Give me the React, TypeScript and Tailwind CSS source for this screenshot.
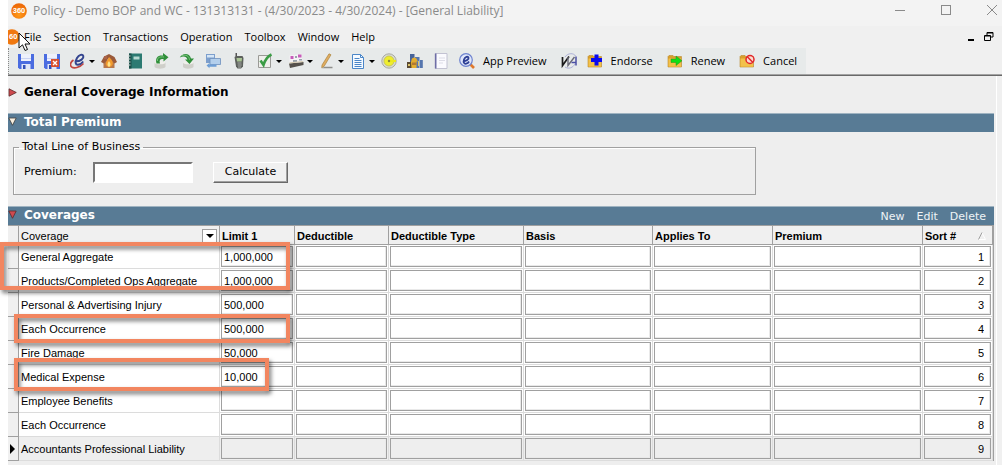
import type { ReactNode } from "react";

const columns = ["Limit 1", "Deductible", "Deductible Type", "Basis", "Applies To", "Premium"];

const rows = [
  { coverage: "General Aggregate", limit: "1,000,000" },
  { coverage: "Products/Completed Ops Aggregate", limit: "1,000,000" },
  { coverage: "Personal & Advertising Injury", limit: "500,000" },
  { coverage: "Each Occurrence", limit: "500,000" },
  { coverage: "Fire Damage", limit: "50,000" },
  { coverage: "Medical Expense", limit: "10,000" },
  { coverage: "Employee Benefits", limit: "" },
  { coverage: "Each Occurrence", limit: "" },
  { coverage: "Accountants Professional Liability", limit: "" },
];

const menu = ["File", "Section", "Transactions", "Operation", "Toolbox", "Window", "Help"];

function Icon({ children }: { children: ReactNode }) {
  return (
    <svg viewBox="0 0 16 16" className="size-4 shrink-0" aria-hidden="true">
      {children}
    </svg>
  );
}

function Logo() {
  return (
    <svg viewBox="0 0 16 16" className="size-4 shrink-0" aria-hidden="true">
      <defs>
        <radialGradient id="orb" cx="50%" cy="75%" r="65%">
          <stop offset="0" stopColor="#ff9a1a" />
          <stop offset="1" stopColor="#ee6a08" />
        </radialGradient>
      </defs>
      <circle cx="8" cy="8" r="7.8" fill="url(#orb)" />
      <text x="8" y="10.2" textAnchor="middle" fontSize="7.5" fontWeight="700" fill="#fff" fontFamily="Liberation Sans, sans-serif">
        360
      </text>
    </svg>
  );
}

function DocumentLogo() {
  return (
    <svg viewBox="4 0 12 16" className="h-4 w-3 shrink-0" aria-hidden="true">
      <circle cx="8" cy="8" r="7.8" fill="#f0780f" />
      <text x="5" y="10.2" fontSize="7.5" fontWeight="700" fill="#fff" fontFamily="Liberation Sans, sans-serif">
        60
      </text>
    </svg>
  );
}

function Floppy() {
  return (
    <>
      <path d="M0 1h16v15H1.500L0 14.500z" fill="#4a6ce0" />
      <path d="M3 1h10v7H3z" fill="#eef1fb" />
      <path d="M3 5h10v1H3z" fill="#c9d2f2" />
      <path d="M3.500 11h9v5h-9z" fill="#dfe5f8" />
      <path d="M5 12h2.500v4H5z" fill="#3350b8" />
    </>
  );
}

function Folder() {
  return (
    <>
      <path d="M1 3.500 2 2.500h4l1 1h7.500v10.500H1z" fill="#d9a02c" stroke="#b98a30" strokeWidth=".6" />
      <path d="M1.500 5.500h12.500v8.200H1.500z" fill="#f2c14a" />
    </>
  );
}

type Tool = { name: string; art: ReactNode; drop?: boolean };

const tools: Tool[] = [
  { name: "Save", art: <Floppy /> },
  {
    name: "Save and close",
    art: (
      <>
        <Floppy />
        <path d="M7 6h8v8H7z" fill="#d9502f" />
        <path d="m9 8 4 4m0-4-4 4" stroke="#fff" strokeWidth="1.400" />
      </>
    ),
  },
  {
    name: "eForms",
    drop: true,
    art: (
      <>
        <path d="M3.500 7C.5 9-.5 12 1.500 13.800c2.500 2 8 1 12-3.300" fill="none" stroke="#c2453f" strokeWidth="1.700" />
        <path
          d="M6 8.300c4.500 0 8-2.800 7.300-5.300C12.600.8 9 1.500 7 5c-2.300 4-1.500 7 1 6.800 2-.2 3.800-1.500 5.200-3.300"
          fill="none"
          stroke="#34458f"
          strokeWidth="2"
        />
      </>
    ),
  },
  {
    name: "Home",
    art: (
      <>
        <path d="M2.500 7h11v8h-11z" fill="#b8784a" />
        <path d="M0 9 3 3.500 8 1l5.500 3L16 9l-2.500 1.500L8 5 3 10.500z" fill="#9a5a3a" />
        <path d="M3 3h3v3H3z" fill="#a9634a" />
        <path d="M8 4c3.500 3 4.500 5.500 3.500 8-1 2.500-5.500 2.500-6.500 0-1-3 2-5 3-8z" fill="#f29a2c" />
        <path d="M8 8c2 2.500 2 5 0 6-2-1-2-3.500 0-6z" fill="#ffe48a" />
      </>
    ),
  },
  {
    name: "Notebook",
    art: (
      <>
        <path d="M2 .5h13v15H2z" fill="#2c7a72" />
        <path d="M2 .5h2.500v15H2z" fill="#1a4f49" />
        <path d="M6.500 3.500h6v3h-6z" fill="#b6dad2" />
        <path d="M1 3h2.500M1 6h2.500M1 9h2.500M1 12h2.500" stroke="#c9d4d2" />
      </>
    ),
  },
  {
    name: "Check out",
    art: (
      <>
        <path d="M1.500 9.500V14c2 2.300 9 2.300 11 0V9.500z" fill="#cfcfca" />
        <ellipse cx="7" cy="9.500" rx="5.500" ry="1.800" fill="#efefeb" />
        <path d="M3.500 10.500C2 4.500 5 2 10 2.500V0l5.500 4.300L10.500 8.500V6C7 5.500 6 7 7 10.500z" fill="#2f8f3a" />
        <path d="M4.500 8C4 5 6 3.500 11 4" fill="none" stroke="#79c27a" />
      </>
    ),
  },
  {
    name: "Check in",
    art: (
      <>
        <path d="M4 9.500V14c2 2.300 8 2.300 10.500 0V9.500z" fill="#cfcfca" />
        <ellipse cx="9.300" cy="9.500" rx="5.300" ry="1.800" fill="#efefeb" />
        <path d="M.8 4.500C3 0 10.500-.8 12 5.500h3L10.500 11 6 6.500h2.500C7.500 3 4 2.800.8 4.500z" fill="#2f8f3a" />
        <path d="M3 2.800c4-1.500 7 0 7.500 4" fill="none" stroke="#79c27a" />
      </>
    ),
  },
  {
    name: "Transfer",
    art: (
      <>
        <path d="M1 1h9v9H1z" fill="#7d9fcd" />
        <path d="M2 2h7v2.500H2z" fill="#d5e5f5" />
        <path d="M5 5.500h10.500v6H5z" fill="#b3cfec" stroke="#6d8fbd" strokeWidth=".8" />
        <path d="m1.500 12.500 3-2.500v1.500h7v2.300h-7v1.500z" fill="#6d9ed6" />
      </>
    ),
  },
  {
    name: "Phone",
    art: (
      <>
        <path d="M4.500 0H6v4H4.500z" fill="#555" />
        <path d="m3.500 4 2-1h6l1 2-.5 8.500-2 2H6.500l-1.500-2z" fill="#5c605c" />
        <path d="M5.500 5h5.500l-.3 3.500H6z" fill="#a9c494" />
        <path d="M6.500 10h4M6.700 12h4M7 14h3" stroke="#a8aca8" />
      </>
    ),
  },
  {
    name: "Approve",
    drop: true,
    art: (
      <>
        <path d="M1.500 2.500h12v12h-12z" fill="#efefec" stroke="#9a9a96" />
        <path d="m3.500 7.500 3 4.500C8 7 10 3.500 14.500 1.500" fill="none" stroke="#3a9c45" strokeWidth="2.600" />
      </>
    ),
  },
  {
    name: "Contacts",
    drop: true,
    art: (
      <>
        <path d="M1.500 2.500 13.500 1l1 8.500H1.500z" fill="#f5f2f6" />
        <path d="M2.500 3h3v3h-3zM10 1.500h3.500v3H10z" fill="#c75cb9" />
        <path d="M7 3h2v2H7zM5 7h4v2H5zM11 6h3v1.500h-3z" fill="#9aa3ad" />
        <path d="m1 10.500 14.500-1.500V12L2 15z" fill="#55514c" />
        <path d="m1 10.500 14.500-1.500-1-1L2 9.300z" fill="#d8ccb2" />
      </>
    ),
  },
  {
    name: "Edit",
    drop: true,
    art: (
      <>
        <path d="m10 .8 2 1L5 13.500l-2.300 1.300.3-2.800z" fill="#e0ad62" stroke="#a3782e" strokeWidth=".6" />
        <path d="M3 15.200h10.500v-1.400H5.500z" fill="#8f8f8c" />
      </>
    ),
  },
  {
    name: "Document",
    drop: true,
    art: (
      <>
        <path d="M2.500 1.500h8l3 3v11h-11z" fill="#f5faff" stroke="#4a86c8" />
        <path d="M10.500 1.500v3h3" fill="none" stroke="#4a86c8" />
        <path d="M4.500 5.500h5m-5 2h7m-7 2h7m-7 2h7m-7 2h7" stroke="#4a86c8" />
      </>
    ),
  },
  {
    name: "Target",
    art: (
      <>
        <circle cx="8" cy="8" r="7.200" fill="#d9dacf" stroke="#a9aba3" />
        <circle cx="8" cy="8" r="5" fill="#efee2d" stroke="#c2bf52" strokeWidth=".8" />
        <path d="M8 7h7v2H8z" fill="#ece91c" />
        <circle cx="8" cy="8" r="1.200" fill="#8c8b3a" />
      </>
    ),
  },
  {
    name: "City",
    art: (
      <>
        <path d="M3 1h4.500v14H3z" fill="#46639a" />
        <path d="M8 4h4.500v11H8zM13 7h2.800v8H13z" fill="#5676ae" />
        <path d="M0 9h6v6H0z" fill="#5a4a32" />
        <path d="M4.500 7c0-3.500 5.500-3.500 5.500 0l1 1.500H9.500L9.500 15h-5L4 9z" fill="#e3ad30" />
        <path d="M5 9.500h4.500V12H5z" fill="#b07a34" />
        <path d="M1 11h2v2H1zM11 8h1v5h-1z" fill="#d9c36a" />
      </>
    ),
  },
  {
    name: "Page",
    art: (
      <>
        <path d="M2 .5h12v15H2z" fill="#fafafe" stroke="#c2c2d2" />
        <path d="M2 .5h1.500v15H2z" fill="#6e6ea6" />
        <path d="M6 5h6M6 7.500h6M6 10h4" stroke="#dcdce6" />
      </>
    ),
  },
];

function Caret() {
  return <span className="size-0 border-x-[3px] border-t-[3px] border-x-transparent border-t-black" />;
}

function LabelledTool({ label, children }: { label: string; children: ReactNode }) {
  return (
    <button className="flex h-full items-center gap-2 pr-[9px] pl-[5px] whitespace-nowrap">
      <Icon>{children}</Icon>
      {label}
    </button>
  );
}

function TitleBar() {
  return (
    <header className="flex h-[26px] items-center bg-[#f3f3f3] pl-[3px] text-xs text-[#8a8a8a]">
      <div className="flex items-center gap-[6px] pb-1">
        <Logo />
        <h1>Policy - Demo BOP and WC - 131313131 - (4/30/2023 - 4/30/2024) - [General Liability]</h1>
      </div>
      <div className="ml-auto flex items-center gap-[34px] pr-1 pb-[6px]">
        <button aria-label="Minimize">
          <svg viewBox="0 0 12 12" className="size-3" stroke="#8a8a8a" fill="none"><path d="M1 6.500h10" /></svg>
        </button>
        <button aria-label="Maximize">
          <svg viewBox="0 0 12 12" className="size-3" stroke="#8a8a8a" fill="none"><rect x="1.500" y="1.500" width="9" height="9" /></svg>
        </button>
        <button aria-label="Close">
          <svg viewBox="0 0 12 12" className="size-3" stroke="#8a8a8a" fill="none"><path d="m1 1 10 10M11 1 1 11" /></svg>
        </button>
      </div>
    </header>
  );
}

function MenuBar() {
  return (
    <nav className="relative flex h-[22px] items-center gap-1 text-[11px] text-black">
      <DocumentLogo />
      <ul className="flex gap-3">
        {menu.map((item) => (
          <li key={item}><button>{item}</button></li>
        ))}
      </ul>
      <div className="ml-auto flex items-center gap-2 pr-2">
        <button aria-label="Minimize document">
          <svg viewBox="0 0 10 10" className="size-[10px]"><path d="M2 7h6v2H2z" /></svg>
        </button>
        <button aria-label="Restore document">
          <svg viewBox="0 0 10 10" className="size-[10px]" fill="none" stroke="#000">
            <path d="M3 3.500V.5h6v4.500H7M3 1h6M1 4h5.500M.5 3.500h6v5h-6z" />
          </svg>
        </button>
      </div>
      <svg viewBox="0 0 13 20" className="absolute top-[6px] left-[10px] z-10 h-5 w-[13px]" aria-hidden="true">
        <path d="M1 1v15l3.500-3.200L7 18.500l2.500-1L7 12h5z" fill="#fff" stroke="#111" />
      </svg>
    </nav>
  );
}

function ToolBar() {
  return (
    <div className="flex h-[27px] border-b border-[#a3a3a3] text-[11px] text-black">
      <div role="toolbar" aria-label="Policy" className="flex h-[26px] items-center border-l border-dotted border-[#888] bg-[#e7eaea] pl-1">
        {tools.map((t) =>
          t.drop ? (
            <button key={t.name} aria-label={t.name} className="flex h-full w-[31px] items-center gap-[3px] pl-[5px]">
              <Icon>{t.art}</Icon>
              <Caret />
            </button>
          ) : (
            <button key={t.name} aria-label={t.name} className="flex h-full w-[26px] items-center justify-center">
              <Icon>{t.art}</Icon>
            </button>
          ),
        )}
        <LabelledTool label="App Preview">
          <path d="m10 10 5 5" stroke="#e07a2e" strokeWidth="2.600" />
          <circle cx="7" cy="7" r="6.300" fill="#dfe6fa" stroke="#6d83cf" strokeWidth="1.200" />
          <path d="M4 8.300c3.500-.2 6-2 5.500-3.600C9 3 6 3.500 5 6.500c-1 3 .3 4.700 2.200 4.200C8.600 10.400 9.500 9.500 10 8.500" fill="none" stroke="#2d3f94" strokeWidth="1.800" />
        </LabelledTool>
        <button aria-label="Validate" className="flex h-full w-[26px] items-center justify-center">
          <Icon>
            <path d="M4 4C7-.5 13 0 14.500 3M4 14c4 2.500 8 .5 10-3" fill="none" stroke="#a5a8d4" strokeWidth=".9" />
            <path d="M1.500 4v8.500L8 3.500" fill="none" stroke="#1b1b1b" strokeWidth="1.700" />
            <path d="M7 4v8.500L13.500 4" fill="none" stroke="#6a6a78" strokeWidth="1.400" />
            <path d="M15 3.500v9M10.500 9.500H15" fill="none" stroke="#4b4fa5" strokeWidth="1.500" />
          </Icon>
        </button>
        <LabelledTool label="Endorse">
          <Folder />
          <path d="M7.500 1.500h4V5H15v4h-3.500v3.500h-4V9H4V5h3.500z" fill="#0a0af0" />
        </LabelledTool>
        <LabelledTool label="Renew">
          <Folder />
          <path d="M4 6h5V3l6 4.800-6 4.700V9.500H4z" fill="#0fe016" stroke="#2e8a1c" strokeWidth=".5" />
        </LabelledTool>
        <LabelledTool label="Cancel">
          <Folder />
          <circle cx="11" cy="6.500" r="4" fill="#f8dcd0" stroke="#e3262a" strokeWidth="1.500" />
          <path d="m8.300 3.700 5.400 5.600" stroke="#e3262a" strokeWidth="1.500" />
        </LabelledTool>
      </div>
    </div>
  );
}

function Triangle({ open, light }: { open?: boolean; light?: boolean }) {
  return (
    <svg viewBox="0 0 9 9" className="size-[9px] shrink-0" aria-hidden="true">
      <path
        d={open ? "M.8 1h7.400L4.500 8.300z" : "M1 .8v7.400L8.300 4.500z"}
        fill={light ? "#f7efdf" : "#cf4a4f"}
        stroke={light ? "#3c3c3c" : "#5b2b2b"}
        strokeWidth=".8"
      />
    </svg>
  );
}

function SectionBar({ title, light, children }: { title: string; light?: boolean; children?: ReactNode }) {
  return (
    <div className="flex h-[19px] items-center border-t border-[#9fb3c1] bg-[#587b95]">
      <button aria-expanded="true" className="flex items-center gap-[7px] pb-[3px] text-xs font-bold text-white">
        <Triangle open light={light} />
        {title}
      </button>
      {children}
    </div>
  );
}

function Field({ label, value, muted, right }: { label: string; value: string; muted?: boolean; right?: boolean }) {
  return (
    <input
      aria-label={label}
      defaultValue={value}
      className={`block h-[21px] w-full border border-[#a0a0a0] pt-px text-[11px] text-black shadow-[inset_-1px_-1px_0_#e9e9e9] outline-none ${
        muted ? "bg-[#eeeeee]" : "bg-white"
      } ${right ? "pr-[6px] text-right" : "pl-[2px]"}`}
    />
  );
}

const headCell = "border-r border-b border-[#a0a0a0] bg-[#f0f0f0] px-[2px] pt-[2px] pb-0 text-left leading-4 font-bold whitespace-nowrap";

function CoverageTable() {
  return (
    <div className="relative border-t border-r border-[#a0a0a0] font-['Liberation_Sans',Arial,sans-serif] text-[11px] text-black">
      <table className="w-full table-fixed border-separate border-spacing-0">
        <colgroup>
          <col className="w-[11px]" />
          <col className="w-[201px]" />
          <col className="w-[75px]" />
          <col className="w-[94px]" />
          <col className="w-[135px]" />
          <col className="w-[129px]" />
          <col className="w-[120px]" />
          <col className="w-[150px]" />
          <col className="w-[70px]" />
        </colgroup>
        <thead>
          <tr className="h-[19px]">
            <th className="border-r border-b border-[#a0a0a0] bg-[#f0f0f0] p-0" />
            <th className={headCell}>
              <div className="flex h-4 items-center justify-between font-normal">
                Coverage
                <button aria-label="Filter coverage" className="flex h-[15px] w-[15px] items-center justify-center border border-[#a0a0a0] bg-white">
                  <span className="size-0 border-x-4 border-t-4 border-x-transparent border-t-black" />
                </button>
              </div>
            </th>
            {columns.map((c) => (
              <th key={c} className={headCell}>{c}</th>
            ))}
            <th className={headCell}>
              <div className="flex items-center justify-between pr-1">
                Sort #
                <svg viewBox="0 0 8 8" className="size-2" aria-hidden="true">
                  <path d="M4 1 7.500 7.500H.5" fill="none" stroke="#fff" />
                  <path d="M.5 7.500 4 .5" stroke="#a0a0a0" />
                </svg>
              </div>
            </th>
          </tr>
        </thead>
        <tbody>
          {rows.map((row, i) => {
            const last = i === rows.length - 1;
            const cell = last ? "border-r border-b border-[#dcdcdc] bg-[#eeeeee]" : "border-r border-b border-[#dcdcdc] bg-white";
            return (
              <tr key={i} className="h-6">
                <td className="border-r border-b border-[#a0a0a0] bg-[#f0f0f0] p-0">
                  {last && <span className="ml-[2px] block size-0 border-y-[5px] border-l-[5px] border-y-transparent border-l-black" />}
                </td>
                <td className={`${cell} px-[2px] pt-[3px] pb-px whitespace-nowrap`}>{row.coverage}</td>
                {columns.map((c) => (
                  <td key={c} className={`${cell} p-px`}>
                    <Field label={`${c}, row ${i + 1}`} value={c === "Limit 1" ? row.limit : ""} muted={last} />
                  </td>
                ))}
                <td className={`${cell} p-px`}>
                  <Field label={`Sort number, row ${i + 1}`} value={String(i + 1)} muted={last} right />
                </td>
              </tr>
            );
          })}
        </tbody>
      </table>
      <div className="pointer-events-none absolute top-4 -left-2 h-12 w-[290px] border-4 border-[#f28660] drop-shadow-[2px_3px_2px_rgba(0,0,0,0.55)]" />
      <div className="pointer-events-none absolute top-[88px] left-[6px] h-[29px] w-[276px] border-4 border-[#f28660] drop-shadow-[2px_3px_2px_rgba(0,0,0,0.55)]" />
      <div className="pointer-events-none absolute top-[132px] left-[6px] h-[33px] w-[255px] border-4 border-[#f28660] drop-shadow-[2px_3px_2px_rgba(0,0,0,0.55)]" />
    </div>
  );
}

export default function App() {
  return (
    <div className="min-h-screen bg-white pl-2 font-['Open_Sans','Segoe_UI',sans-serif]">
      <div className="flex min-h-screen flex-col bg-[#f0f0f0]">
        <TitleBar />
        <MenuBar />
        <ToolBar />
        <div className="flex grow border-t border-[#696969] pr-[5px]">
          <main className="grow border-r border-white bg-[#eeeeee] pr-[2px] font-['DejaVu_Sans',Verdana,sans-serif] text-black">
            <button aria-expanded="false" className="flex items-center gap-[7px] pt-2 text-xs font-bold">
              <Triangle />
              General Coverage Information
            </button>
            <div className="pt-[13px]">
              <SectionBar title="Total Premium" light />
              <div className="pt-[6px] pb-[11px] pl-[5px] text-[11px]">
                <fieldset className="h-[57px] w-[743px] max-w-full border border-[#a0a0a0] shadow-[inset_1px_1px_0_#fff]">
                  <legend className="ml-[5px] px-[3px] leading-[18px]">Total Line of Business</legend>
                  <div className="flex items-center pt-[6px] pl-[10px]">
                    <label htmlFor="premium" className="w-[69px]">Premium:</label>
                    <input id="premium" className="h-[21px] w-[100px] border-2 border-t-[#777] border-r-white border-b-white border-l-[#777] bg-white px-1 outline-none" />
                    <button className="ml-5 h-[21px] w-[75px] border border-t-white border-r-[#696969] border-b-[#696969] border-l-white bg-[#f0f0f0] shadow-[inset_-1px_-1px_0_#a0a0a0]">
                      Calculate
                    </button>
                  </div>
                </fieldset>
              </div>
              <SectionBar title="Coverages">
                <div className="ml-auto flex gap-3 pt-[3px] pr-2 text-[11px] text-[#eef3f6]">
                  <button>New</button>
                  <button>Edit</button>
                  <button>Delete</button>
                </div>
              </SectionBar>
              <CoverageTable />
            </div>
          </main>
        </div>
      </div>
    </div>
  );
}
